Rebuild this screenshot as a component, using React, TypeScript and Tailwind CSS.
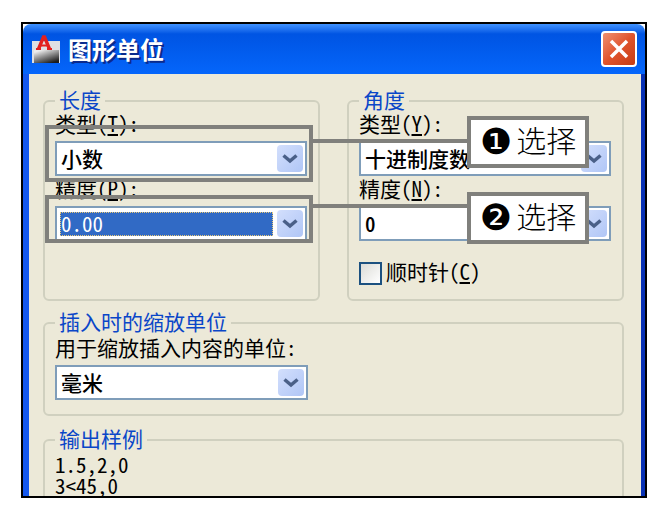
import { useState } from "react";
import type { ReactNode } from "react";
import clsx from "clsx";

type Option = { value: string; label: string };

const lengthTypes: Option[] = [{ value: "decimal", label: "小数" }];
const lengthPrecision: Option[] = [{ value: "2", label: "0.00" }];
const angleTypes: Option[] = [{ value: "degrees", label: "十进制度数" }];
const anglePrecision: Option[] = [{ value: "0", label: "0" }];
const insertUnits: Option[] = [{ value: "mm", label: "毫米" }];

const AppIcon = () => (
  <svg viewBox="0 0 28 29" className="w-7 h-[29px] shrink-0" aria-hidden="true">
    <defs>
      <linearGradient id="appIcon" x1="0.2" y1="0" x2="0.8" y2="1">
        <stop offset="0.05" stopColor="#ececec" />
        <stop offset="0.45" stopColor="#8f8f8f" />
        <stop offset="0.95" stopColor="#1c1c1c" />
      </linearGradient>
    </defs>
    <rect x="0" y="6" width="28" height="22" fill="#dfe0e4" />
    <rect x="2" y="15" width="25" height="13" fill="url(#appIcon)" />
    <path d="M6.500 14 L11.500 2 H12.500 L17.500 14" fill="none" stroke="#e3201f" strokeWidth="3.400" />
    <path d="M4 14 H9 M15 14 H20 M8 10.500 H16" stroke="#e3201f" strokeWidth="2.200" />
  </svg>
);

const Arrow = () => (
  <span className="w-[26px] h-[27px] shrink-0 rounded-sm bg-linear-to-br from-[#d3dffc] to-[#b0c6f6] flex items-center justify-center pointer-events-none">
    <svg viewBox="0 0 16 10" className="w-4 h-2.5" aria-hidden="true">
      <path d="M1.500 1.500 L8 7 L14.500 1.500" fill="none" stroke="#4a6088" strokeWidth="3.500" />
    </svg>
  </span>
);

const Group = ({
  title,
  className,
  children,
}: {
  title: string;
  className: string;
  children: ReactNode;
}) => (
  <fieldset className={clsx("min-w-0 border-2 border-[#d0d0bf] pl-2.5 pr-[11px]", className)}>
    <legend className="px-1 pb-1 text-[#0a46c8] leading-5">{title}</legend>
    {children}
  </fieldset>
);

const Field = ({
  id,
  label,
  hotkey,
  options,
  selected,
  className,
  children,
}: {
  id: string;
  label: string;
  hotkey?: string;
  options: Option[];
  selected?: boolean;
  className?: string;
  children?: ReactNode;
}) => (
  <div className={className}>
    <label htmlFor={id} className="block leading-5 mb-2">
      {label}
      {hotkey && (
        <>
          (<u className="underline-offset-2">{hotkey}</u>)
        </>
      )}
      :
    </label>
    <div className="relative h-[35px] border-2 border-[#7f9db9] bg-white flex items-center gap-1 pl-[3px] pr-0.5">
      <select
        id={id}
        className={clsx(
          "appearance-none flex-1 min-w-0 outline-none border",
          selected
            ? "h-6 pb-0.5 leading-5 bg-[#316ac5] text-white border-dotted border-[#e8c878]"
            : "h-[30px] pb-0.5 leading-[26px] text-black font-medium border-transparent"
        )}
      >
        {options.map((o) => (
          <option key={o.value} value={o.value}>
            {o.label}
          </option>
        ))}
      </select>
      <Arrow />
      {children}
    </div>
  </div>
);

// grey line from a framed field to its numbered note
const Callout = ({ mark, className }: { mark: string; className: string }) => (
  <>
    <span className="absolute -left-[49px] right-32 -top-1 h-1 bg-[#80807c]" />
    <div
      className={clsx(
        "absolute right-5 w-[122px] h-[52px] border-4 border-[#80807c] bg-white flex items-center justify-center gap-1 text-[30px] leading-none font-light",
        className
      )}
    >
      <span className="font-['DejaVu_Sans'] text-[36px] leading-none font-normal">{mark}</span>
      <span className="pb-1.5">选择</span>
    </div>
  </>
);

const App = () => {
  const [clockwise, setClockwise] = useState(false);

  return (
    <main className="bg-white pt-[22px] pl-[21px] pr-[15px] pb-3.5 text-black text-[21px] font-['Noto_Sans_CJK_SC',sans-serif] [font-feature-settings:'hwid']">
      <div className="border-2 border-black bg-white">
        <header className="h-[50px] rounded-t-lg bg-linear-to-b from-[#3f92ff] via-[#0054e3] via-20% to-[#0566fb] flex items-center gap-2 pl-[9px] pr-2">
          <AppIcon />
          <h1 className="flex-1 text-2xl font-bold text-white [text-shadow:2px_2px_0_#0a2a8c]">图形单位</h1>
          <button
            type="button"
            aria-label="关闭"
            className="size-9 rounded-[4px] border-2 border-white bg-linear-to-br from-[#ee8f70] via-[#e0532c] to-[#c63c14] flex items-center justify-center"
          >
            <svg viewBox="0 0 20 20" className="size-5" aria-hidden="true">
              <path d="M2 2 L18 18 M18 2 L2 18" stroke="#fff" strokeWidth="3.500" />
            </svg>
          </button>
        </header>

        <div className="border-l-6 border-r-4 border-l-[#1458ee] border-r-[#0831b4] bg-[#ece9d8] pt-[15px] pl-3.5 pr-[17px]">
          <div className="grid grid-cols-2 gap-[27px]">
            <Group title="长度" className="rounded-md pb-3.5">
              <Field id="length-type" label="类型" hotkey="T" options={lengthTypes}>
                <span className="absolute -left-3 -right-2 -top-[18px] -bottom-2 border-4 border-[#80807c] pointer-events-none" />
              </Field>
              <Field
                id="length-precision"
                label="精度"
                hotkey="P"
                options={lengthPrecision}
                selected
                className="mt-0.5"
              >
                <span className="absolute -left-3 -right-2 -top-[13px] -bottom-1 border-4 border-[#80807c] pointer-events-none" />
              </Field>
            </Group>

            <Group title="角度" className="rounded-md pb-3.5">
              <Field id="angle-type" label="类型" hotkey="Y" options={angleTypes}>
                <Callout mark="❶" className="-top-[27px]" />
              </Field>
              <Field
                id="angle-precision"
                label="精度"
                hotkey="N"
                options={anglePrecision}
                className="mt-0.5"
              >
                <Callout mark="❷" className="-top-4" />
              </Field>
              <label className="mt-5 flex items-center gap-1 h-6 leading-5">
                <input
                  type="checkbox"
                  checked={clockwise}
                  onChange={(e) => setClockwise(e.target.checked)}
                  className="appearance-none size-[23px] border-2 border-[#1c5180] bg-linear-to-br from-[#dcdcd7] to-white checked:bg-[#21a121]"
                />
                <span className="pb-1">
                  顺时针(<u className="underline-offset-2">C</u>)
                </span>
              </label>
            </Group>
          </div>

          <Group title="插入时的缩放单位" className="mt-2.5 rounded-md pt-0.5 pb-3.5">
            <Field
              id="insert-units"
              label="用于缩放插入内容的单位"
              options={insertUnits}
              className="w-5/11"
            />
          </Group>

          <Group title="输出样例" className="mt-3 rounded-t-md border-b-0">
            <div className="pt-0.5 leading-[21px]">
              <p>1.5,2,0</p>
              <p>3&lt;45,0</p>
            </div>
          </Group>
        </div>
      </div>
    </main>
  );
};

export default App;
